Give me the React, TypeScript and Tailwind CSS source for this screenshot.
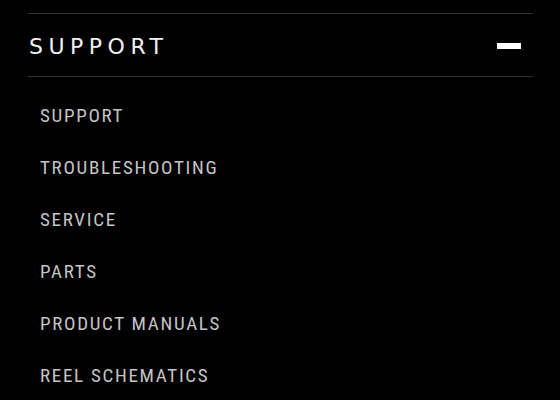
const links = [
  "SUPPORT",
  "TROUBLESHOOTING",
  "SERVICE",
  "PARTS",
  "PRODUCT MANUALS",
  "REEL SCHEMATICS",
];

export default function App() {
  return (
    <div className="min-h-[400px] w-full bg-black pt-[13px] pl-[28px] pr-[27px] overflow-hidden">
      <div className="border-y border-[#333333]">
        {/* Accordion header */}
        <button className="flex h-[62px] w-full items-center justify-between pt-[3px] pl-[1px] pr-[12px]">
          <span
            className="text-[22px] leading-none tracking-[0.25em] text-[#f2f2f2]"
            style={{ fontFamily: '"DejaVu Sans", sans-serif' }}
          >
            SUPPORT
          </span>
          <span className="-mt-[1px] block h-[6px] w-[24px] bg-white" />
        </button>
      </div>

      {/* Open panel */}
      <ul className="pt-[12px] pl-[12px]">
        {links.map((label) => (
          <li
            key={label}
            className="flex h-[52px] items-center text-[19px] leading-none tracking-[0.09em] text-[#c4c4c4]"
            style={{ fontFamily: '"Roboto Condensed", Roboto, sans-serif' }}
          >
            {label}
          </li>
        ))}
      </ul>
    </div>
  );
}
